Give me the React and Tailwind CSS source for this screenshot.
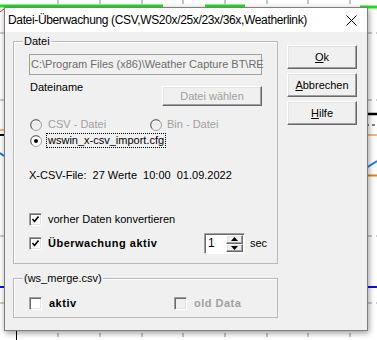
import React from "react";

function Chart() {
  const ticks = [58, 100, 142, 183, 225, 267, 308, 350];
  return (
    <svg className="absolute inset-0" width="377" height="340" viewBox="0 0 377 340">
      <rect width="377" height="340" fill="#ffffff" />
      {[33, 100, 236, 303].map((y) => (
        <line key={y} x1="0" y1={y} x2="377" y2={y} stroke="#9a9a9a" strokeDasharray="4 4" />
      ))}
      {ticks.map((x) => (
        <g key={x}>
          <line x1={x} y1="0" x2={x} y2="4" stroke="#8a8a8a" />
          <line x1={x} y1="333" x2={x} y2="337" stroke="#8a8a8a" />
        </g>
      ))}
      <line x1="16.5" y1="331" x2="16.5" y2="340" stroke="#000" />
      <line x1="0" y1="6" x2="163" y2="6" stroke="#1ee11e" strokeWidth="3" />
      <line x1="205" y1="6" x2="245" y2="6" stroke="#1ee11e" strokeWidth="3" />
      <line x1="360" y1="7" x2="377" y2="7" stroke="#1ee11e" strokeWidth="3" />
      <polyline points="0,12 4,9" fill="none" stroke="#e02020" />
      <line x1="0" y1="130" x2="6" y2="130" stroke="#e87010" />
      <line x1="0" y1="135" x2="6" y2="135" stroke="#000" strokeWidth="2" />
      <polyline points="0,153 4,156" fill="none" stroke="#1a6fe0" strokeWidth="2" />
      <line x1="362" y1="114" x2="377" y2="114" stroke="#000" strokeWidth="2.5" />
      <line x1="366" y1="125" x2="377" y2="125" stroke="#000" strokeDasharray="3 3" />
      <line x1="364" y1="135" x2="377" y2="135" stroke="#e87010" />
      <polyline points="366,168 377,161" fill="none" stroke="#1a7ff0" strokeWidth="2" />
      <line x1="364" y1="175.5" x2="377" y2="175.5" stroke="#e88010" strokeWidth="2" />
      <line x1="0" y1="287" x2="377" y2="287" stroke="#1010e0" strokeWidth="2" />
    </svg>
  );
}

function WinButton({ children, disabled, className = "" }) {
  return (
    <div
      className={`flex items-center justify-center bg-[#f0f0f0] border border-t-white border-l-white border-r-[#696969] border-b-[#696969] shadow-[inset_-1px_-1px_0_#a0a0a0,inset_1px_1px_0_#e3e3e3] ${
        disabled ? "text-[#a0a0a0]" : "text-black"
      } ${className}`}
    >
      {children}
    </div>
  );
}

function Check({ checked, disabled }) {
  return (
    <div
      className={`w-[13px] h-[13px] flex items-center justify-center border border-t-[#a0a0a0] border-l-[#a0a0a0] border-r-white border-b-white shadow-[inset_1px_1px_0_#696969,inset_-1px_-1px_0_#e3e3e3] ${
        disabled ? "bg-[#f0f0f0]" : "bg-white"
      }`}
    >
      {checked && (
        <svg width="9" height="9" viewBox="0 0 9 9">
          <path d="M1.5 4 L3.5 6.5 L7.5 1.5" fill="none" stroke="#000" strokeWidth="1.6" />
        </svg>
      )}
    </div>
  );
}

function Radio({ checked, disabled }) {
  return (
    <svg width="12" height="12" viewBox="0 0 12 12">
      <circle cx="6" cy="6" r="5.5" fill={disabled ? "#f0f0f0" : "#ffffff"} stroke="#a0a0a0" />
      <path d="M2.3 9.7 A5 5 0 0 1 9.7 2.3" fill="none" stroke="#696969" strokeWidth="1" />
      {checked && <circle cx="6" cy="6" r="2" fill="#000" />}
    </svg>
  );
}

function Group({ label, className = "", children }) {
  return (
    <div className={`relative border border-[#b9b9b9] shadow-[inset_1px_1px_0_#ffffff] ${className}`}>
      <span className="absolute -top-[7px] left-[9px] bg-[#f0f0f0] px-[1px] leading-[13px]">{label}</span>
      {children}
    </div>
  );
}

export default function App() {
  return (
    <div
      className="relative w-[377px] h-[340px] overflow-hidden text-[11px] leading-[13px] text-black"
      style={{ fontFamily: "'Liberation Sans', Arial, sans-serif" }}
    >
      <Chart />

      <div className="absolute left-[4px] top-[7px] w-[364px] h-[324px] flex flex-col border border-[#7f7f7f] bg-[#f0f0f0] shadow-[1px_2px_6px_rgba(0,0,0,0.4)]">
        <div className="h-[24px] bg-white flex items-center justify-between pl-[3px] pr-[10px]">
          <span className="text-[12px] tracking-[-0.35px]">Datei-Überwachung (CSV,WS20x/25x/23x/36x,Weatherlink)</span>
          <svg width="11" height="11" viewBox="0 0 11 11">
            <path d="M0.5 0.5 L10.5 10.5 M10.5 0.5 L0.5 10.5" stroke="#000" strokeWidth="1" />
          </svg>
        </div>

        <div className="flex">
          <div className="ml-[8px] w-[265px] flex flex-col">
            <Group label="Datei" className="mt-[9px] pl-[15px] pb-[9px]">
              <div className="mt-[12px] w-[233px] h-[21px] border border-[#a0a0a0] bg-[#f0f0f0] flex items-center pl-[1px] whitespace-nowrap text-[#6d6d6d]">
                C:\Program Files (x86)\Weather Capture BT\RE
              </div>
              <div className="flex justify-between w-[233px] mt-[6px]">
                <span className="pl-[1px]">Dateiname</span>
                <WinButton disabled className="mt-[5px] w-[100px] h-[20px]">Datei wählen</WinButton>
              </div>
              <div className="flex items-center mt-[12px] h-[13px] text-[#a0a0a0]">
                <div className="flex items-center gap-[6px] w-[121px] pl-[1px]">
                  <Radio disabled />
                  <span>CSV - Datei</span>
                </div>
                <div className="flex items-center gap-[5px]">
                  <Radio disabled />
                  <span>Bin - Datei</span>
                </div>
              </div>
              <div className="flex items-center mt-[2px] h-[15px] pl-[1px] gap-[4px]">
                <Radio checked />
                <span className="border border-dotted border-black px-[1px] leading-[13px]">wswin_x-csv_import.cfg</span>
              </div>
              <div className="mt-[21px] whitespace-pre">X-CSV-File:  27 Werte  10:00  01.09.2022</div>
              <div className="flex items-center gap-[6px] mt-[31px] h-[13px]">
                <Check checked />
                <span>vorher Daten konvertieren</span>
              </div>
              <div className="flex items-center mt-[7px] h-[21px]">
                <Check checked />
                <span className="ml-[6px] font-bold tracking-[0.5px] w-[156px]">Überwachung aktiv</span>
                <div className="w-[41px] h-[21px] flex border border-t-[#a0a0a0] border-l-[#a0a0a0] border-r-white border-b-white shadow-[inset_1px_1px_0_#696969] bg-white">
                  <span className="flex-1 pl-[3px] pt-[3px] text-[12px]">1</span>
                  <div className="w-[17px] flex flex-col my-[1px] mr-[1px]">
                    <WinButton className="flex-1">
                      <svg width="7" height="4" viewBox="0 0 7 4"><path d="M3.5 0 L7 4 L0 4 Z" fill="#000" /></svg>
                    </WinButton>
                    <WinButton className="flex-1">
                      <svg width="7" height="4" viewBox="0 0 7 4"><path d="M0 0 L7 0 L3.5 4 Z" fill="#000" /></svg>
                    </WinButton>
                  </div>
                </div>
                <span className="ml-[5px]">sec</span>
              </div>
            </Group>

            <Group label="(ws_merge.csv)" className="mt-[14px] pl-[15px] pb-[7px]">
              <div className="flex items-center mt-[18px] h-[13px]">
                <Check />
                <span className="ml-[7px] font-bold tracking-[0.5px] w-[125px]">aktiv</span>
                <Check disabled />
                <span className="ml-[7px] font-bold tracking-[0.5px] text-[#a0a0a0]">old Data</span>
              </div>
            </Group>
          </div>

          <div className="ml-[9px] mt-[13px] w-[70px] flex flex-col gap-[4px]">
            <WinButton className="h-[24px]"><span><u>O</u>k</span></WinButton>
            <WinButton className="h-[24px]"><span><u>A</u>bbrechen</span></WinButton>
            <WinButton className="h-[24px]"><span><u>H</u>ilfe</span></WinButton>
          </div>
        </div>
      </div>
    </div>
  );
}
